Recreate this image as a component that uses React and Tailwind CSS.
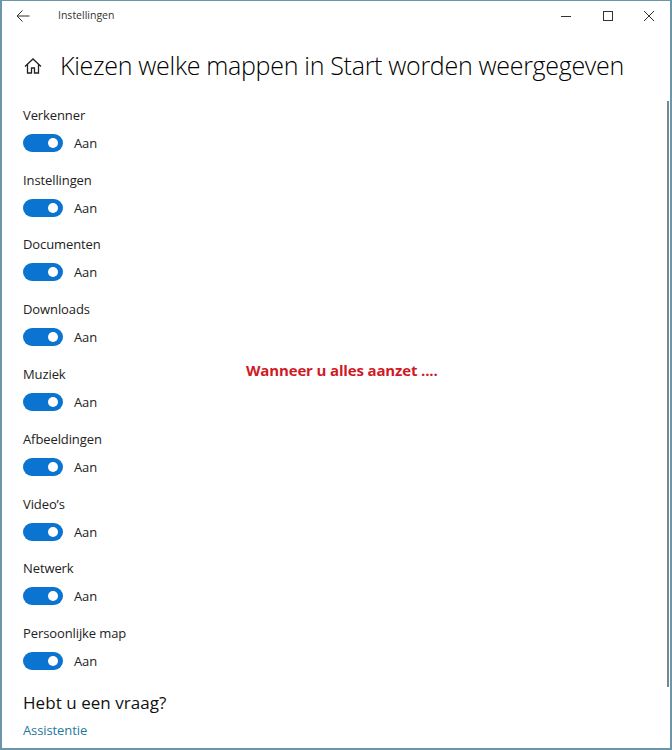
import React from 'react';

const folders = ['Verkenner', 'Instellingen', 'Documenten', 'Downloads', 'Muziek', 'Afbeeldingen', "Video’s", 'Netwerk', 'Persoonlijke map'];

const Toggle = () => (
  <div className="flex items-center gap-[11px]">
    <div className="w-10 h-[18px] rounded-full bg-[#0a74d0] flex items-center justify-end pr-[5px]">
      <div className="w-[10px] h-[10px] rounded-full bg-white" />
    </div>
    <span className="text-[13px] leading-[18px] tracking-[-0.1px] text-[#222]">Aan</span>
  </div>
);

const FolderRow = ({ name }) => (
  <div className="h-[64.8px]">
    <div className="text-[13px] leading-[20px] tracking-[-0.1px] text-[#222] mb-[9px]">{name}</div>
    <Toggle />
  </div>
);

export default function App() {
  return (
    <div className="relative w-[672px] h-[750px] bg-white border-t border-x-2 border-b-2 border-[#6a96ab] font-['Open_Sans','Noto_Sans',sans-serif] overflow-hidden">
      {/* Title bar */}
      <div className="h-[29px] flex items-center">
        <svg className="ml-[14px] w-[14px] h-[14px] text-[#333]" viewBox="0 0 14 14" fill="none" stroke="currentColor" strokeWidth="1">
          <path d="M1 7h12.5M6.5 1.5 1 7l5.5 5.5" />
        </svg>
        <span className="ml-[28px] text-[10.5px] text-[#333]">Instellingen</span>
        <div className="ml-auto flex items-center text-[#333]">
          <svg className="w-[12px] h-[12px]" viewBox="0 0 12 12" stroke="currentColor" strokeWidth="1"><path d="M1 6.5h10" /></svg>
          <svg className="ml-[30px] w-[12px] h-[12px]" viewBox="0 0 12 12" fill="none" stroke="currentColor" strokeWidth="1"><rect x="1.5" y="1.5" width="9" height="9" /></svg>
          <svg className="ml-[29px] mr-[15px] w-[12px] h-[12px]" viewBox="0 0 12 12" stroke="currentColor" strokeWidth="1"><path d="M1 1l10 10M11 1 1 11" /></svg>
        </div>
      </div>

      {/* Page heading */}
      <div className="h-[72px] flex items-center pl-[21px]">
        <svg className="w-[20px] h-[20px] text-[#222]" viewBox="0 0 20 20" fill="none" stroke="currentColor" strokeWidth="1.3">
          <path d="M2 10.5 10 3l8 7.5M4.5 8.5V17h4v-5h3v5h4V8.5" />
        </svg>
        <h1 className="ml-[17px] text-[25px] tracking-[-0.3px] font-light text-black whitespace-nowrap">Kiezen welke mappen in Start worden weergegeven</h1>
      </div>

      {/* Folder list */}
      <div className="pl-[21px] pt-[2.8px]">
        {folders.map((name) => (
          <FolderRow key={name} name={name} />
        ))}
        <div className="mt-[2px] text-[17px] leading-[26px] tracking-[0.05px] text-[#111]">Hebt u een vraag?</div>
        <div className="mt-[4px] text-[13px] leading-[20px] tracking-[-0.1px] text-[#1f7a9c]">Assistentie</div>
      </div>

      {/* Annotation on top of the screenshot */}
      <div className="absolute left-[244px] top-[359px] text-[15px] leading-[20px] tracking-[-0.15px] font-bold text-[#cf1a26] whitespace-nowrap">Wanneer u alles aanzet ....</div>

      {/* Scrollbar */}
      <div className="absolute right-[1px] top-[100px] w-[2px] h-[586px] bg-[#7d868c]" />
    </div>
  );
}
